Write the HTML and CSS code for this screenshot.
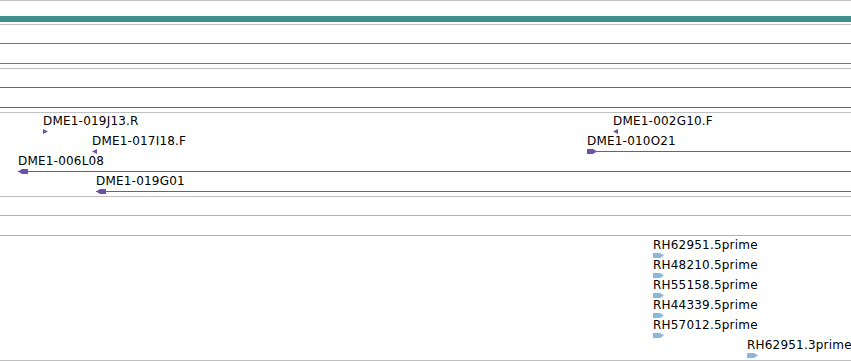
FILE: index.html
```html
<!DOCTYPE html>
<html>
<head>
<meta charset="utf-8">
<link rel="stylesheet" href="styles.css">
</head>
<body>
<div class="browser">
  <div class="track">
    <div class="row"><div class="bar-teal"></div></div>
  </div>
  <div class="track">
    <div class="row"><div class="span span-teal"></div></div>
    <div class="row"><div class="span span-teal"></div></div>
  </div>
  <div class="track">
    <div class="row"><div class="span span-blue"></div></div>
    <div class="row"><div class="span span-blue"></div></div>
  </div>
  <div class="track">
    <div class="row">
      <span class="label" style="left:43px">DME1-019J13.R</span>
      <svg class="glyph tri" style="left:43px" width="5" height="5" viewBox="0 0 5 5"><polygon points="0,0 5,2.5 0,5" fill="#6b52a8"/></svg>
      <span class="label" style="left:613px">DME1-002G10.F</span>
      <svg class="glyph tri" style="left:613px" width="5" height="5" viewBox="0 0 5 5"><polygon points="5,0 0,2.5 5,5" fill="#6b52a8"/></svg>
    </div>
    <div class="row">
      <span class="label" style="left:92px">DME1-017I18.F</span>
      <svg class="glyph tri" style="left:92px" width="5" height="5" viewBox="0 0 5 5"><polygon points="5,0 0,2.5 5,5" fill="#6b52a8"/></svg>
      <span class="label" style="left:587px">DME1-010O21</span>
      <div class="span span-purple" style="left:587px"></div>
      <svg class="glyph arrow" style="left:587px" width="10" height="5" viewBox="0 0 10 5"><polygon points="0,0 6,0 10,2.5 6,5 0,5" fill="#6b52a8"/></svg>
    </div>
    <div class="row">
      <span class="label" style="left:18px">DME1-006L08</span>
      <div class="span span-purple" style="left:18px"></div>
      <svg class="glyph arrow" style="left:18px" width="10" height="5" viewBox="0 0 10 5"><polygon points="0,2.5 4,0 10,0 10,5 4,5" fill="#6b52a8"/></svg>
    </div>
    <div class="row">
      <span class="label" style="left:96px">DME1-019G01</span>
      <div class="span span-purple" style="left:96px"></div>
      <svg class="glyph arrow" style="left:96px" width="10" height="5" viewBox="0 0 10 5"><polygon points="0,2.5 4,0 10,0 10,5 4,5" fill="#6b52a8"/></svg>
    </div>
  </div>
  <div class="track track-last">
    <div class="row"><div class="span span-light"></div></div>
    <div class="row"><div class="span span-light"></div></div>
    <div class="row">
      <span class="label" style="left:653px">RH62951.5prime</span>
      <svg class="glyph est" style="left:653px" width="11" height="5" viewBox="0 0 11 5"><polygon points="0,0 7,0 11,2.5 7,5 0,5" fill="#88b8de"/></svg>
    </div>
    <div class="row">
      <span class="label" style="left:653px">RH48210.5prime</span>
      <svg class="glyph est" style="left:653px" width="11" height="5" viewBox="0 0 11 5"><polygon points="0,0 7,0 11,2.5 7,5 0,5" fill="#88b8de"/></svg>
    </div>
    <div class="row">
      <span class="label" style="left:653px">RH55158.5prime</span>
      <svg class="glyph est" style="left:653px" width="11" height="5" viewBox="0 0 11 5"><polygon points="0,0 7,0 11,2.5 7,5 0,5" fill="#88b8de"/></svg>
    </div>
    <div class="row">
      <span class="label" style="left:653px">RH44339.5prime</span>
      <svg class="glyph est" style="left:653px" width="11" height="5" viewBox="0 0 11 5"><polygon points="0,0 7,0 11,2.5 7,5 0,5" fill="#88b8de"/></svg>
    </div>
    <div class="row">
      <span class="label" style="left:653px">RH57012.5prime</span>
      <svg class="glyph est" style="left:653px" width="11" height="5" viewBox="0 0 11 5"><polygon points="0,0 7,0 11,2.5 7,5 0,5" fill="#88b8de"/></svg>
    </div>
    <div class="row">
      <span class="label" style="left:747px">RH62951.3prime</span>
      <svg class="glyph est" style="left:747px" width="11" height="5" viewBox="0 0 11 5"><polygon points="0,0 7,0 11,2.5 7,5 0,5" fill="#88b8de"/></svg>
    </div>
  </div>
</div>
</body>
</html>
```
FILE: styles.css
```css
html, body {
  margin: 0;
  padding: 0;
  background: #ffffff;
}
.browser {
  width: 851px;
  display: flex;
  flex-direction: column;
  font-family: "DejaVu Sans", sans-serif;
  font-size: 12px;
  color: #000;
}
.track {
  border-top: 1px solid #c0c0c0;
  padding-bottom: 3px;
  display: flex;
  flex-direction: column;
}
.track-last {
  border-bottom: 1px solid #c0c0c0;
}
.row {
  position: relative;
  height: 20px;
}
.bar-teal {
  position: absolute;
  left: 0;
  right: 0;
  top: 15px;
  height: 6px;
  background: #3f8f8f;
}
.span {
  position: absolute;
  left: 0;
  right: 0;
  top: 18px;
  height: 1px;
}
.span-teal { background: #2b8db0; }
.span-blue { background: #3b6cc0; }
.span-purple { background: #6e57a8; }
.span-light { background: #8cbbe0; }
.label {
  position: absolute;
  top: 1px;
  line-height: 14px;
  letter-spacing: 0.2px;
  white-space: nowrap;
}
.glyph {
  position: absolute;
  top: 16px;
  display: block;
}
```
